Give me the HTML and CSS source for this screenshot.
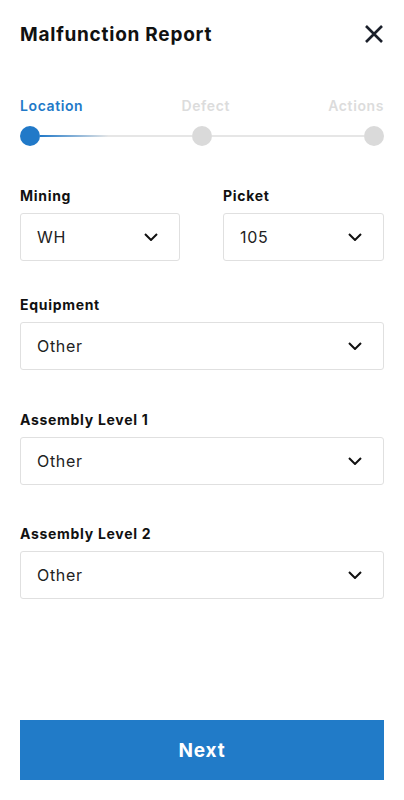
FILE: index.html
```html
<!DOCTYPE html>
<html lang="en">
    <head>
        <meta charset="UTF-8">
        <title>Malfunction Report</title>
        <link rel="stylesheet" href="styles.css">
    </head>

    <body>
        <div class="screen">

            <div class="header">
                <p class="title">Malfunction Report</p>
                <button class="close_button">
                    <svg width="20" height="20" viewBox="0 0 20 20">
                        <path d="M2 2 L18 18 M18 2 L2 18" stroke="#1b202b" stroke-width="2.6" fill="none"/>
                    </svg>
                </button>
            </div>

            <div class="steps">
                <div class="step_labels">
                    <p class="step_txt active">Location</p>
                    <p class="step_txt">Defect</p>
                    <p class="step_txt">Actions</p>
                </div>
                <div class="step_track">
                    <div class="dot active"></div>
                    <div class="line first"></div>
                    <div class="dot"></div>
                    <div class="line"></div>
                    <div class="dot"></div>
                </div>
            </div>

            <div class="row">
                <div class="field">
                    <p class="label">Mining</p>
                    <div class="select"><span>WH</span><svg class="chev" width="14" height="8" viewBox="0 0 14 8"><path d="M1 1 L7 7 L13 1" stroke="#111" stroke-width="2" fill="none"/></svg></div>
                </div>
                <div class="field">
                    <p class="label">Picket</p>
                    <div class="select"><span>105</span><svg class="chev" width="14" height="8" viewBox="0 0 14 8"><path d="M1 1 L7 7 L13 1" stroke="#111" stroke-width="2" fill="none"/></svg></div>
                </div>
            </div>

            <div class="field first_full">
                <p class="label">Equipment</p>
                <div class="select"><span>Other</span><svg class="chev" width="14" height="8" viewBox="0 0 14 8"><path d="M1 1 L7 7 L13 1" stroke="#111" stroke-width="2" fill="none"/></svg></div>
            </div>

            <div class="field full">
                <p class="label">Assembly Level 1</p>
                <div class="select"><span>Other</span><svg class="chev" width="14" height="8" viewBox="0 0 14 8"><path d="M1 1 L7 7 L13 1" stroke="#111" stroke-width="2" fill="none"/></svg></div>
            </div>

            <div class="field full">
                <p class="label">Assembly Level 2</p>
                <div class="select"><span>Other</span><svg class="chev" width="14" height="8" viewBox="0 0 14 8"><path d="M1 1 L7 7 L13 1" stroke="#111" stroke-width="2" fill="none"/></svg></div>
            </div>

            <button class="next_button">Next</button>
        </div>
    </body>
</html>
```

FILE: styles.css
```css
body {
    margin: 0;
    background-color: white;
    font-family: 'Inter', 'Noto Sans', sans-serif;
    color: #111;
}

p {
    margin: 0;
}

.screen {
    display: flex;
    flex-direction: column;
    height: 800px;
    padding: 0 20px;
    box-sizing: border-box;
}

.header {
    display: flex;
    justify-content: space-between;
    align-items: center;
    height: 68px;
}

.title {
    font-size: 19px;
    font-weight: 700;
    letter-spacing: 0.75px;
}

.close_button {
    background: transparent;
    border: none;
    padding: 0;
    width: 20px;
    height: 20px;
}

.steps {
    margin-top: 29px;
}

.step_labels {
    display: flex;
    justify-content: space-between;
}

.step_txt {
    font-size: 14px;
    font-weight: 600;
    letter-spacing: 0.6px;
    color: #dcdcdc;
    line-height: 17px;
}

.step_txt.active {
    color: #2179c8;
}

.step_track {
    display: flex;
    align-items: center;
    margin-top: 12px;
}

.dot {
    width: 20px;
    height: 20px;
    border-radius: 50%;
    background-color: #dadada;
    flex-shrink: 0;
}

.dot.active {
    background-color: #2179c8;
}

.line {
    flex: 1;
    height: 2px;
    background-color: #e6e6e6;
}

.line.first {
    background: linear-gradient(to right, #2179c8 0%, #e6e6e6 45%, #e6e6e6 100%);
}

.row {
    display: grid;
    grid-template-columns: 160px 1fr;
    gap: 43px;
    margin-top: 41px;
}

.field {
    display: flex;
    flex-direction: column;
}

.first_full {
    margin-top: 35px;
}

.full {
    margin-top: 41px;
}

.full:last-of-type {
    margin-top: 40px;
}

.label {
    font-size: 14px;
    font-weight: 700;
    letter-spacing: 0.7px;
    line-height: 17px;
    margin-bottom: 9px;
}

.select {
    display: flex;
    justify-content: space-between;
    align-items: center;
    height: 48px;
    border: 1px solid #e0e0e0;
    border-radius: 3px;
    padding: 0 21px 0 16px;
    box-sizing: border-box;
    font-size: 16px;
    letter-spacing: 0.7px;
    color: #222;
}

.next_button {
    margin-top: auto;
    margin-bottom: 20px;
    height: 60px;
    width: 100%;
    background-color: #217bc8;
    border: none;
    color: white;
    font-family: inherit;
    font-size: 19px;
    font-weight: 700;
    letter-spacing: 0.8px;
}
```
